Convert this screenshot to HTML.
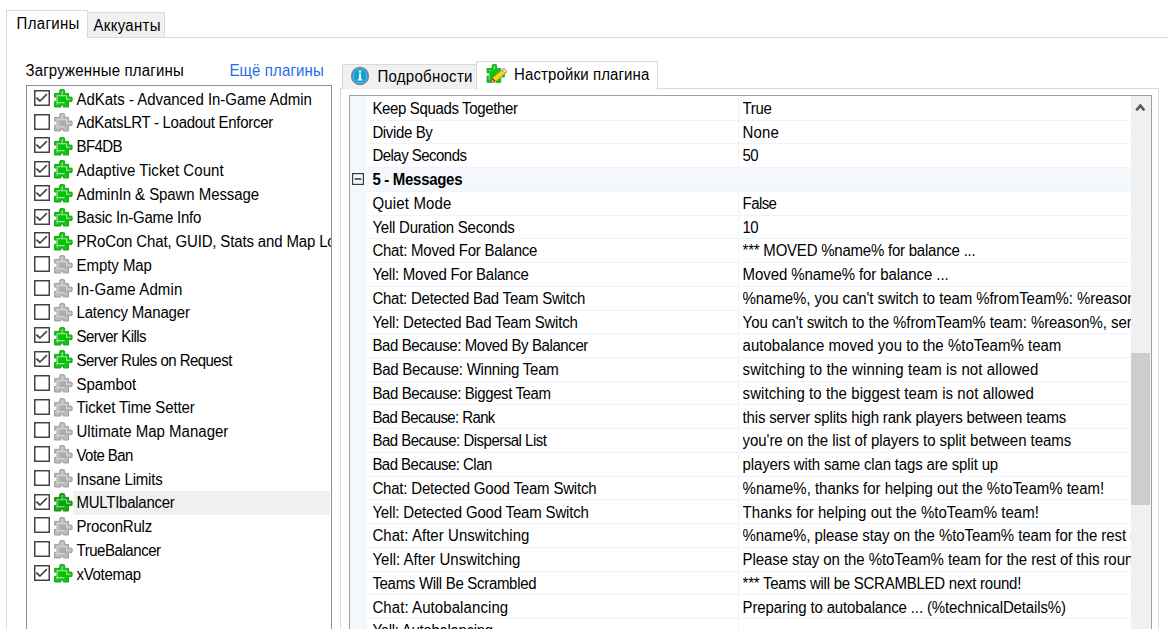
<!DOCTYPE html>
<html><head><meta charset="utf-8"><style>
*{box-sizing:border-box}
html,body{margin:0;padding:0;width:1168px;height:629px;overflow:hidden;background:#fff;
 font-family:"Liberation Sans",sans-serif;font-size:15px;color:#000}
.abs{position:absolute}
.t{position:absolute;white-space:nowrap;line-height:17px;transform:scaleY(1.04);transform-origin:0 13.7px}
.nm,.vl{overflow:hidden}
.tab{position:absolute;border:1px solid #dadada;background:#f0f0f0;border-bottom:none}
.tabsel{background:#fff}
#list{position:absolute;left:26px;top:85px;width:306px;height:560px;border:1px solid #8c929b;background:#fff;overflow:hidden}
.it{position:absolute;left:-27px;width:330px;height:23.75px}
.it.sel::before{content:"";position:absolute;left:73px;top:1px;width:257px;height:24px;background:#f0f0f0}
.ck{position:absolute;left:33.5px;top:3.8px}
.pz{position:absolute;left:50px;top:0px}
#grid{position:absolute;left:349px;top:95px;width:803px;height:600px;border:1px solid #a0a0a0;background:#fff;overflow:hidden}
.margin{position:absolute;left:0;top:0;width:17px;height:100%;background:#f4f7fc}
.row{position:absolute;left:-350px;width:1131px;height:23.75px}
.row::after{content:"";position:absolute;left:367px;right:0;bottom:0;height:1px;background:#f0f3f9}
.row::before{content:"";position:absolute;left:738px;top:0;width:1px;height:100%;background:#f0f3f9}
.row.cat{background:linear-gradient(to right, transparent 350px, #f4f7fc 350px)}
.row.cat::before{display:none}
.minus{position:absolute;left:352px;top:6px}
#sb{position:absolute;left:781px;top:0;width:20px;height:100%;background:#f0f0f0}
#thumb{position:absolute;left:0;top:257px;width:19px;height:152px;background:#cdcdcd}
</style></head><body>
<div class="abs" style="left:87px;top:37px;width:1081px;height:1px;background:#dadada"></div>
<div class="abs" style="left:6px;top:37px;width:1px;height:600px;background:#dadada"></div>
<div class="tab" style="left:87px;top:12px;width:78px;height:25px"></div>
<div class="tab tabsel" style="left:6px;top:10px;width:82px;height:28px"></div>
<div class="t" style="left:16.5px;top:15.30px;letter-spacing:0.35px">Плагины</div>
<div class="t" style="left:93.5px;top:17.30px;letter-spacing:0.3px">Аккуанты</div>
<div class="t" style="left:25.4px;top:62.30px;letter-spacing:0.18px">Загруженные плагины</div>
<div class="t" style="left:229.4px;top:62.30px;color:#1e6ee8;letter-spacing:0.14px">Ещё плагины</div>

<div id="list"><div class="it" style="top:0.00px"><svg class="ck" width="16" height="16" viewBox="0 0 16 16"><rect x="0.75" y="0.75" width="14.5" height="14.5" fill="#fff" stroke="#383838" stroke-width="1.4"/><path d="M2.3 7.6 L6 11 L12.9 4.2" fill="none" stroke="#454545" stroke-width="1.7" stroke-linejoin="round"/></svg><svg class="pz" width="24" height="24" viewBox="0 0 24 24"><path d="M4.6 7.4 H9.7 V4.8 Q9.7 3.6 10.9 3.6 H13.5 Q14.7 3.6 14.7 4.8 V7.4 H18.5 V11.1 H21.4 Q22.1 11.1 22.1 11.8 V14.9 Q22.1 15.6 21.4 15.6 H18.5 V21 H13.4 V19.1 H10.9 V21 H4.6 V15.3 H6.9 V11.1 H4.6 Z" fill="#19be19" stroke="#06b006" stroke-width="1"/><rect x="10" y="10.2" width="6.4" height="6" fill="#00c600"/><path d="M6.6 9.8 H16.6 V13.3 H20.5 M12.2 5 V9.8 M7.1 9.8 V18.4 M7.1 16.6 H14.5" stroke="#b0e0b0" stroke-width="1.1" fill="none"/></svg><div class="t" style="left:76.5px;top:4.60px;letter-spacing:-0.02px">AdKats - Advanced In-Game Admin</div></div><div class="it" style="top:23.75px"><svg class="ck" width="16" height="16" viewBox="0 0 16 16"><rect x="0.75" y="0.75" width="14.5" height="14.5" fill="#fff" stroke="#383838" stroke-width="1.4"/></svg><svg class="pz" width="24" height="24" viewBox="0 0 24 24"><path d="M4.6 7.4 H9.7 V4.8 Q9.7 3.6 10.9 3.6 H13.5 Q14.7 3.6 14.7 4.8 V7.4 H18.5 V11.1 H21.4 Q22.1 11.1 22.1 11.8 V14.9 Q22.1 15.6 21.4 15.6 H18.5 V21 H13.4 V19.1 H10.9 V21 H4.6 V15.3 H6.9 V11.1 H4.6 Z" fill="#bababa" stroke="#9e9e9e" stroke-width="1"/><rect x="10" y="10.2" width="6.4" height="6" fill="#acacac"/><path d="M6.6 9.8 H16.6 V13.3 H20.5 M12.2 5 V9.8 M7.1 9.8 V18.4 M7.1 16.6 H14.5" stroke="#d6d6d6" stroke-width="1.1" fill="none"/></svg><div class="t" style="left:76.5px;top:4.60px;letter-spacing:-0.289px">AdKatsLRT - Loadout Enforcer</div></div><div class="it" style="top:47.50px"><svg class="ck" width="16" height="16" viewBox="0 0 16 16"><rect x="0.75" y="0.75" width="14.5" height="14.5" fill="#fff" stroke="#383838" stroke-width="1.4"/><path d="M2.3 7.6 L6 11 L12.9 4.2" fill="none" stroke="#454545" stroke-width="1.7" stroke-linejoin="round"/></svg><svg class="pz" width="24" height="24" viewBox="0 0 24 24"><path d="M4.6 7.4 H9.7 V4.8 Q9.7 3.6 10.9 3.6 H13.5 Q14.7 3.6 14.7 4.8 V7.4 H18.5 V11.1 H21.4 Q22.1 11.1 22.1 11.8 V14.9 Q22.1 15.6 21.4 15.6 H18.5 V21 H13.4 V19.1 H10.9 V21 H4.6 V15.3 H6.9 V11.1 H4.6 Z" fill="#19be19" stroke="#06b006" stroke-width="1"/><rect x="10" y="10.2" width="6.4" height="6" fill="#00c600"/><path d="M6.6 9.8 H16.6 V13.3 H20.5 M12.2 5 V9.8 M7.1 9.8 V18.4 M7.1 16.6 H14.5" stroke="#b0e0b0" stroke-width="1.1" fill="none"/></svg><div class="t" style="left:76.5px;top:4.60px;letter-spacing:-0.6px">BF4DB</div></div><div class="it" style="top:71.25px"><svg class="ck" width="16" height="16" viewBox="0 0 16 16"><rect x="0.75" y="0.75" width="14.5" height="14.5" fill="#fff" stroke="#383838" stroke-width="1.4"/><path d="M2.3 7.6 L6 11 L12.9 4.2" fill="none" stroke="#454545" stroke-width="1.7" stroke-linejoin="round"/></svg><svg class="pz" width="24" height="24" viewBox="0 0 24 24"><path d="M4.6 7.4 H9.7 V4.8 Q9.7 3.6 10.9 3.6 H13.5 Q14.7 3.6 14.7 4.8 V7.4 H18.5 V11.1 H21.4 Q22.1 11.1 22.1 11.8 V14.9 Q22.1 15.6 21.4 15.6 H18.5 V21 H13.4 V19.1 H10.9 V21 H4.6 V15.3 H6.9 V11.1 H4.6 Z" fill="#19be19" stroke="#06b006" stroke-width="1"/><rect x="10" y="10.2" width="6.4" height="6" fill="#00c600"/><path d="M6.6 9.8 H16.6 V13.3 H20.5 M12.2 5 V9.8 M7.1 9.8 V18.4 M7.1 16.6 H14.5" stroke="#b0e0b0" stroke-width="1.1" fill="none"/></svg><div class="t" style="left:76.5px;top:4.60px;letter-spacing:0.06px">Adaptive Ticket Count</div></div><div class="it" style="top:95.00px"><svg class="ck" width="16" height="16" viewBox="0 0 16 16"><rect x="0.75" y="0.75" width="14.5" height="14.5" fill="#fff" stroke="#383838" stroke-width="1.4"/><path d="M2.3 7.6 L6 11 L12.9 4.2" fill="none" stroke="#454545" stroke-width="1.7" stroke-linejoin="round"/></svg><svg class="pz" width="24" height="24" viewBox="0 0 24 24"><path d="M4.6 7.4 H9.7 V4.8 Q9.7 3.6 10.9 3.6 H13.5 Q14.7 3.6 14.7 4.8 V7.4 H18.5 V11.1 H21.4 Q22.1 11.1 22.1 11.8 V14.9 Q22.1 15.6 21.4 15.6 H18.5 V21 H13.4 V19.1 H10.9 V21 H4.6 V15.3 H6.9 V11.1 H4.6 Z" fill="#19be19" stroke="#06b006" stroke-width="1"/><rect x="10" y="10.2" width="6.4" height="6" fill="#00c600"/><path d="M6.6 9.8 H16.6 V13.3 H20.5 M12.2 5 V9.8 M7.1 9.8 V18.4 M7.1 16.6 H14.5" stroke="#b0e0b0" stroke-width="1.1" fill="none"/></svg><div class="t" style="left:76.5px;top:4.60px;letter-spacing:-0.073px">AdminIn &amp; Spawn Message</div></div><div class="it" style="top:118.75px"><svg class="ck" width="16" height="16" viewBox="0 0 16 16"><rect x="0.75" y="0.75" width="14.5" height="14.5" fill="#fff" stroke="#383838" stroke-width="1.4"/><path d="M2.3 7.6 L6 11 L12.9 4.2" fill="none" stroke="#454545" stroke-width="1.7" stroke-linejoin="round"/></svg><svg class="pz" width="24" height="24" viewBox="0 0 24 24"><path d="M4.6 7.4 H9.7 V4.8 Q9.7 3.6 10.9 3.6 H13.5 Q14.7 3.6 14.7 4.8 V7.4 H18.5 V11.1 H21.4 Q22.1 11.1 22.1 11.8 V14.9 Q22.1 15.6 21.4 15.6 H18.5 V21 H13.4 V19.1 H10.9 V21 H4.6 V15.3 H6.9 V11.1 H4.6 Z" fill="#19be19" stroke="#06b006" stroke-width="1"/><rect x="10" y="10.2" width="6.4" height="6" fill="#00c600"/><path d="M6.6 9.8 H16.6 V13.3 H20.5 M12.2 5 V9.8 M7.1 9.8 V18.4 M7.1 16.6 H14.5" stroke="#b0e0b0" stroke-width="1.1" fill="none"/></svg><div class="t" style="left:76.5px;top:4.60px;letter-spacing:-0.206px">Basic In-Game Info</div></div><div class="it" style="top:142.50px"><svg class="ck" width="16" height="16" viewBox="0 0 16 16"><rect x="0.75" y="0.75" width="14.5" height="14.5" fill="#fff" stroke="#383838" stroke-width="1.4"/><path d="M2.3 7.6 L6 11 L12.9 4.2" fill="none" stroke="#454545" stroke-width="1.7" stroke-linejoin="round"/></svg><svg class="pz" width="24" height="24" viewBox="0 0 24 24"><path d="M4.6 7.4 H9.7 V4.8 Q9.7 3.6 10.9 3.6 H13.5 Q14.7 3.6 14.7 4.8 V7.4 H18.5 V11.1 H21.4 Q22.1 11.1 22.1 11.8 V14.9 Q22.1 15.6 21.4 15.6 H18.5 V21 H13.4 V19.1 H10.9 V21 H4.6 V15.3 H6.9 V11.1 H4.6 Z" fill="#19be19" stroke="#06b006" stroke-width="1"/><rect x="10" y="10.2" width="6.4" height="6" fill="#00c600"/><path d="M6.6 9.8 H16.6 V13.3 H20.5 M12.2 5 V9.8 M7.1 9.8 V18.4 M7.1 16.6 H14.5" stroke="#b0e0b0" stroke-width="1.1" fill="none"/></svg><div class="t" style="left:76.5px;top:4.60px;letter-spacing:-0.15px">PRoCon Chat, GUID, Stats and Map Logger</div></div><div class="it" style="top:166.25px"><svg class="ck" width="16" height="16" viewBox="0 0 16 16"><rect x="0.75" y="0.75" width="14.5" height="14.5" fill="#fff" stroke="#383838" stroke-width="1.4"/></svg><svg class="pz" width="24" height="24" viewBox="0 0 24 24"><path d="M4.6 7.4 H9.7 V4.8 Q9.7 3.6 10.9 3.6 H13.5 Q14.7 3.6 14.7 4.8 V7.4 H18.5 V11.1 H21.4 Q22.1 11.1 22.1 11.8 V14.9 Q22.1 15.6 21.4 15.6 H18.5 V21 H13.4 V19.1 H10.9 V21 H4.6 V15.3 H6.9 V11.1 H4.6 Z" fill="#bababa" stroke="#9e9e9e" stroke-width="1"/><rect x="10" y="10.2" width="6.4" height="6" fill="#acacac"/><path d="M6.6 9.8 H16.6 V13.3 H20.5 M12.2 5 V9.8 M7.1 9.8 V18.4 M7.1 16.6 H14.5" stroke="#d6d6d6" stroke-width="1.1" fill="none"/></svg><div class="t" style="left:76.5px;top:4.60px;letter-spacing:-0.05px">Empty Map</div></div><div class="it" style="top:190.00px"><svg class="ck" width="16" height="16" viewBox="0 0 16 16"><rect x="0.75" y="0.75" width="14.5" height="14.5" fill="#fff" stroke="#383838" stroke-width="1.4"/></svg><svg class="pz" width="24" height="24" viewBox="0 0 24 24"><path d="M4.6 7.4 H9.7 V4.8 Q9.7 3.6 10.9 3.6 H13.5 Q14.7 3.6 14.7 4.8 V7.4 H18.5 V11.1 H21.4 Q22.1 11.1 22.1 11.8 V14.9 Q22.1 15.6 21.4 15.6 H18.5 V21 H13.4 V19.1 H10.9 V21 H4.6 V15.3 H6.9 V11.1 H4.6 Z" fill="#bababa" stroke="#9e9e9e" stroke-width="1"/><rect x="10" y="10.2" width="6.4" height="6" fill="#acacac"/><path d="M6.6 9.8 H16.6 V13.3 H20.5 M12.2 5 V9.8 M7.1 9.8 V18.4 M7.1 16.6 H14.5" stroke="#d6d6d6" stroke-width="1.1" fill="none"/></svg><div class="t" style="left:76.5px;top:4.60px;letter-spacing:0.133px">In-Game Admin</div></div><div class="it" style="top:213.75px"><svg class="ck" width="16" height="16" viewBox="0 0 16 16"><rect x="0.75" y="0.75" width="14.5" height="14.5" fill="#fff" stroke="#383838" stroke-width="1.4"/></svg><svg class="pz" width="24" height="24" viewBox="0 0 24 24"><path d="M4.6 7.4 H9.7 V4.8 Q9.7 3.6 10.9 3.6 H13.5 Q14.7 3.6 14.7 4.8 V7.4 H18.5 V11.1 H21.4 Q22.1 11.1 22.1 11.8 V14.9 Q22.1 15.6 21.4 15.6 H18.5 V21 H13.4 V19.1 H10.9 V21 H4.6 V15.3 H6.9 V11.1 H4.6 Z" fill="#bababa" stroke="#9e9e9e" stroke-width="1"/><rect x="10" y="10.2" width="6.4" height="6" fill="#acacac"/><path d="M6.6 9.8 H16.6 V13.3 H20.5 M12.2 5 V9.8 M7.1 9.8 V18.4 M7.1 16.6 H14.5" stroke="#d6d6d6" stroke-width="1.1" fill="none"/></svg><div class="t" style="left:76.5px;top:4.60px;letter-spacing:-0.179px">Latency Manager</div></div><div class="it" style="top:237.50px"><svg class="ck" width="16" height="16" viewBox="0 0 16 16"><rect x="0.75" y="0.75" width="14.5" height="14.5" fill="#fff" stroke="#383838" stroke-width="1.4"/><path d="M2.3 7.6 L6 11 L12.9 4.2" fill="none" stroke="#454545" stroke-width="1.7" stroke-linejoin="round"/></svg><svg class="pz" width="24" height="24" viewBox="0 0 24 24"><path d="M4.6 7.4 H9.7 V4.8 Q9.7 3.6 10.9 3.6 H13.5 Q14.7 3.6 14.7 4.8 V7.4 H18.5 V11.1 H21.4 Q22.1 11.1 22.1 11.8 V14.9 Q22.1 15.6 21.4 15.6 H18.5 V21 H13.4 V19.1 H10.9 V21 H4.6 V15.3 H6.9 V11.1 H4.6 Z" fill="#19be19" stroke="#06b006" stroke-width="1"/><rect x="10" y="10.2" width="6.4" height="6" fill="#00c600"/><path d="M6.6 9.8 H16.6 V13.3 H20.5 M12.2 5 V9.8 M7.1 9.8 V18.4 M7.1 16.6 H14.5" stroke="#b0e0b0" stroke-width="1.1" fill="none"/></svg><div class="t" style="left:76.5px;top:4.60px;letter-spacing:-0.527px">Server Kills</div></div><div class="it" style="top:261.25px"><svg class="ck" width="16" height="16" viewBox="0 0 16 16"><rect x="0.75" y="0.75" width="14.5" height="14.5" fill="#fff" stroke="#383838" stroke-width="1.4"/><path d="M2.3 7.6 L6 11 L12.9 4.2" fill="none" stroke="#454545" stroke-width="1.7" stroke-linejoin="round"/></svg><svg class="pz" width="24" height="24" viewBox="0 0 24 24"><path d="M4.6 7.4 H9.7 V4.8 Q9.7 3.6 10.9 3.6 H13.5 Q14.7 3.6 14.7 4.8 V7.4 H18.5 V11.1 H21.4 Q22.1 11.1 22.1 11.8 V14.9 Q22.1 15.6 21.4 15.6 H18.5 V21 H13.4 V19.1 H10.9 V21 H4.6 V15.3 H6.9 V11.1 H4.6 Z" fill="#19be19" stroke="#06b006" stroke-width="1"/><rect x="10" y="10.2" width="6.4" height="6" fill="#00c600"/><path d="M6.6 9.8 H16.6 V13.3 H20.5 M12.2 5 V9.8 M7.1 9.8 V18.4 M7.1 16.6 H14.5" stroke="#b0e0b0" stroke-width="1.1" fill="none"/></svg><div class="t" style="left:76.5px;top:4.60px;letter-spacing:-0.536px">Server Rules on Request</div></div><div class="it" style="top:285.00px"><svg class="ck" width="16" height="16" viewBox="0 0 16 16"><rect x="0.75" y="0.75" width="14.5" height="14.5" fill="#fff" stroke="#383838" stroke-width="1.4"/></svg><svg class="pz" width="24" height="24" viewBox="0 0 24 24"><path d="M4.6 7.4 H9.7 V4.8 Q9.7 3.6 10.9 3.6 H13.5 Q14.7 3.6 14.7 4.8 V7.4 H18.5 V11.1 H21.4 Q22.1 11.1 22.1 11.8 V14.9 Q22.1 15.6 21.4 15.6 H18.5 V21 H13.4 V19.1 H10.9 V21 H4.6 V15.3 H6.9 V11.1 H4.6 Z" fill="#bababa" stroke="#9e9e9e" stroke-width="1"/><rect x="10" y="10.2" width="6.4" height="6" fill="#acacac"/><path d="M6.6 9.8 H16.6 V13.3 H20.5 M12.2 5 V9.8 M7.1 9.8 V18.4 M7.1 16.6 H14.5" stroke="#d6d6d6" stroke-width="1.1" fill="none"/></svg><div class="t" style="left:76.5px;top:4.60px;letter-spacing:-0.05px">Spambot</div></div><div class="it" style="top:308.75px"><svg class="ck" width="16" height="16" viewBox="0 0 16 16"><rect x="0.75" y="0.75" width="14.5" height="14.5" fill="#fff" stroke="#383838" stroke-width="1.4"/></svg><svg class="pz" width="24" height="24" viewBox="0 0 24 24"><path d="M4.6 7.4 H9.7 V4.8 Q9.7 3.6 10.9 3.6 H13.5 Q14.7 3.6 14.7 4.8 V7.4 H18.5 V11.1 H21.4 Q22.1 11.1 22.1 11.8 V14.9 Q22.1 15.6 21.4 15.6 H18.5 V21 H13.4 V19.1 H10.9 V21 H4.6 V15.3 H6.9 V11.1 H4.6 Z" fill="#bababa" stroke="#9e9e9e" stroke-width="1"/><rect x="10" y="10.2" width="6.4" height="6" fill="#acacac"/><path d="M6.6 9.8 H16.6 V13.3 H20.5 M12.2 5 V9.8 M7.1 9.8 V18.4 M7.1 16.6 H14.5" stroke="#d6d6d6" stroke-width="1.1" fill="none"/></svg><div class="t" style="left:76.5px;top:4.60px;letter-spacing:-0.124px">Ticket Time Setter</div></div><div class="it" style="top:332.50px"><svg class="ck" width="16" height="16" viewBox="0 0 16 16"><rect x="0.75" y="0.75" width="14.5" height="14.5" fill="#fff" stroke="#383838" stroke-width="1.4"/></svg><svg class="pz" width="24" height="24" viewBox="0 0 24 24"><path d="M4.6 7.4 H9.7 V4.8 Q9.7 3.6 10.9 3.6 H13.5 Q14.7 3.6 14.7 4.8 V7.4 H18.5 V11.1 H21.4 Q22.1 11.1 22.1 11.8 V14.9 Q22.1 15.6 21.4 15.6 H18.5 V21 H13.4 V19.1 H10.9 V21 H4.6 V15.3 H6.9 V11.1 H4.6 Z" fill="#bababa" stroke="#9e9e9e" stroke-width="1"/><rect x="10" y="10.2" width="6.4" height="6" fill="#acacac"/><path d="M6.6 9.8 H16.6 V13.3 H20.5 M12.2 5 V9.8 M7.1 9.8 V18.4 M7.1 16.6 H14.5" stroke="#d6d6d6" stroke-width="1.1" fill="none"/></svg><div class="t" style="left:76.5px;top:4.60px;letter-spacing:0.005px">Ultimate Map Manager</div></div><div class="it" style="top:356.25px"><svg class="ck" width="16" height="16" viewBox="0 0 16 16"><rect x="0.75" y="0.75" width="14.5" height="14.5" fill="#fff" stroke="#383838" stroke-width="1.4"/></svg><svg class="pz" width="24" height="24" viewBox="0 0 24 24"><path d="M4.6 7.4 H9.7 V4.8 Q9.7 3.6 10.9 3.6 H13.5 Q14.7 3.6 14.7 4.8 V7.4 H18.5 V11.1 H21.4 Q22.1 11.1 22.1 11.8 V14.9 Q22.1 15.6 21.4 15.6 H18.5 V21 H13.4 V19.1 H10.9 V21 H4.6 V15.3 H6.9 V11.1 H4.6 Z" fill="#bababa" stroke="#9e9e9e" stroke-width="1"/><rect x="10" y="10.2" width="6.4" height="6" fill="#acacac"/><path d="M6.6 9.8 H16.6 V13.3 H20.5 M12.2 5 V9.8 M7.1 9.8 V18.4 M7.1 16.6 H14.5" stroke="#d6d6d6" stroke-width="1.1" fill="none"/></svg><div class="t" style="left:76.5px;top:4.60px;letter-spacing:-0.571px">Vote Ban</div></div><div class="it" style="top:380.00px"><svg class="ck" width="16" height="16" viewBox="0 0 16 16"><rect x="0.75" y="0.75" width="14.5" height="14.5" fill="#fff" stroke="#383838" stroke-width="1.4"/></svg><svg class="pz" width="24" height="24" viewBox="0 0 24 24"><path d="M4.6 7.4 H9.7 V4.8 Q9.7 3.6 10.9 3.6 H13.5 Q14.7 3.6 14.7 4.8 V7.4 H18.5 V11.1 H21.4 Q22.1 11.1 22.1 11.8 V14.9 Q22.1 15.6 21.4 15.6 H18.5 V21 H13.4 V19.1 H10.9 V21 H4.6 V15.3 H6.9 V11.1 H4.6 Z" fill="#bababa" stroke="#9e9e9e" stroke-width="1"/><rect x="10" y="10.2" width="6.4" height="6" fill="#acacac"/><path d="M6.6 9.8 H16.6 V13.3 H20.5 M12.2 5 V9.8 M7.1 9.8 V18.4 M7.1 16.6 H14.5" stroke="#d6d6d6" stroke-width="1.1" fill="none"/></svg><div class="t" style="left:76.5px;top:4.60px;letter-spacing:-0.175px">Insane Limits</div></div><div class="it sel" style="top:403.75px"><svg class="ck" width="16" height="16" viewBox="0 0 16 16"><rect x="0.75" y="0.75" width="14.5" height="14.5" fill="#fff" stroke="#383838" stroke-width="1.4"/><path d="M2.3 7.6 L6 11 L12.9 4.2" fill="none" stroke="#454545" stroke-width="1.7" stroke-linejoin="round"/></svg><svg class="pz" width="24" height="24" viewBox="0 0 24 24"><path d="M4.6 7.4 H9.7 V4.8 Q9.7 3.6 10.9 3.6 H13.5 Q14.7 3.6 14.7 4.8 V7.4 H18.5 V11.1 H21.4 Q22.1 11.1 22.1 11.8 V14.9 Q22.1 15.6 21.4 15.6 H18.5 V21 H13.4 V19.1 H10.9 V21 H4.6 V15.3 H6.9 V11.1 H4.6 Z" fill="#16a816" stroke="#089408" stroke-width="1"/><rect x="10" y="10.2" width="6.4" height="6" fill="#04a804"/><path d="M6.6 9.8 H16.6 V13.3 H20.5 M12.2 5 V9.8 M7.1 9.8 V18.4 M7.1 16.6 H14.5" stroke="#8fcf8f" stroke-width="1.1" fill="none"/></svg><div class="t" style="left:76.5px;top:4.60px;letter-spacing:-0.258px">MULTIbalancer</div></div><div class="it" style="top:427.50px"><svg class="ck" width="16" height="16" viewBox="0 0 16 16"><rect x="0.75" y="0.75" width="14.5" height="14.5" fill="#fff" stroke="#383838" stroke-width="1.4"/></svg><svg class="pz" width="24" height="24" viewBox="0 0 24 24"><path d="M4.6 7.4 H9.7 V4.8 Q9.7 3.6 10.9 3.6 H13.5 Q14.7 3.6 14.7 4.8 V7.4 H18.5 V11.1 H21.4 Q22.1 11.1 22.1 11.8 V14.9 Q22.1 15.6 21.4 15.6 H18.5 V21 H13.4 V19.1 H10.9 V21 H4.6 V15.3 H6.9 V11.1 H4.6 Z" fill="#bababa" stroke="#9e9e9e" stroke-width="1"/><rect x="10" y="10.2" width="6.4" height="6" fill="#acacac"/><path d="M6.6 9.8 H16.6 V13.3 H20.5 M12.2 5 V9.8 M7.1 9.8 V18.4 M7.1 16.6 H14.5" stroke="#d6d6d6" stroke-width="1.1" fill="none"/></svg><div class="t" style="left:76.5px;top:4.60px;letter-spacing:-0.211px">ProconRulz</div></div><div class="it" style="top:451.25px"><svg class="ck" width="16" height="16" viewBox="0 0 16 16"><rect x="0.75" y="0.75" width="14.5" height="14.5" fill="#fff" stroke="#383838" stroke-width="1.4"/></svg><svg class="pz" width="24" height="24" viewBox="0 0 24 24"><path d="M4.6 7.4 H9.7 V4.8 Q9.7 3.6 10.9 3.6 H13.5 Q14.7 3.6 14.7 4.8 V7.4 H18.5 V11.1 H21.4 Q22.1 11.1 22.1 11.8 V14.9 Q22.1 15.6 21.4 15.6 H18.5 V21 H13.4 V19.1 H10.9 V21 H4.6 V15.3 H6.9 V11.1 H4.6 Z" fill="#bababa" stroke="#9e9e9e" stroke-width="1"/><rect x="10" y="10.2" width="6.4" height="6" fill="#acacac"/><path d="M6.6 9.8 H16.6 V13.3 H20.5 M12.2 5 V9.8 M7.1 9.8 V18.4 M7.1 16.6 H14.5" stroke="#d6d6d6" stroke-width="1.1" fill="none"/></svg><div class="t" style="left:76.5px;top:4.60px;letter-spacing:-0.445px">TrueBalancer</div></div><div class="it" style="top:475.00px"><svg class="ck" width="16" height="16" viewBox="0 0 16 16"><rect x="0.75" y="0.75" width="14.5" height="14.5" fill="#fff" stroke="#383838" stroke-width="1.4"/><path d="M2.3 7.6 L6 11 L12.9 4.2" fill="none" stroke="#454545" stroke-width="1.7" stroke-linejoin="round"/></svg><svg class="pz" width="24" height="24" viewBox="0 0 24 24"><path d="M4.6 7.4 H9.7 V4.8 Q9.7 3.6 10.9 3.6 H13.5 Q14.7 3.6 14.7 4.8 V7.4 H18.5 V11.1 H21.4 Q22.1 11.1 22.1 11.8 V14.9 Q22.1 15.6 21.4 15.6 H18.5 V21 H13.4 V19.1 H10.9 V21 H4.6 V15.3 H6.9 V11.1 H4.6 Z" fill="#19be19" stroke="#06b006" stroke-width="1"/><rect x="10" y="10.2" width="6.4" height="6" fill="#00c600"/><path d="M6.6 9.8 H16.6 V13.3 H20.5 M12.2 5 V9.8 M7.1 9.8 V18.4 M7.1 16.6 H14.5" stroke="#b0e0b0" stroke-width="1.1" fill="none"/></svg><div class="t" style="left:76.5px;top:4.60px;letter-spacing:-0.314px">xVotemap</div></div></div>

<div class="abs" style="left:340px;top:88px;width:819px;height:600px;border:1px solid #dadada;background:#fff"></div>
<div class="tab" style="left:342px;top:64px;width:135px;height:25px"></div>
<div class="tab tabsel" style="left:476px;top:61px;width:182px;height:29px"></div>
<svg class="abs" style="left:350px;top:66px" width="20" height="20" viewBox="0 0 20 20">
 <circle cx="10" cy="10" r="8.5" fill="#10a0d6" stroke="#7d8b96" stroke-width="1.4"/>
 <circle cx="10" cy="10" r="6.8" fill="none" stroke="#5cc0e8" stroke-width="0.8"/>
 <rect x="8.9" y="4.6" width="2.2" height="2" fill="#fff"/>
 <path d="M8.9 7.6 H11.1 V13.2 H12.3 V14.6 H7.7 V13.2 H8.9 Z" fill="#fff"/>
</svg>
<div class="t" style="left:377.5px;top:68.30px;letter-spacing:0.27px">Подробности</div>
<svg class="abs" style="left:484px;top:62px" width="24" height="24" viewBox="0 0 24 24">
 <path d="M3.1 6.5 H8.2 V3.6 Q8.2 2.5 9.3 2.5 H11.6 Q12.7 2.5 12.7 3.6 V6.5 H16.7 V10.9 H20.3 V14.9 H16.7 V20.3 H12 V18.6 H9.6 V20.3 H3.1 V14 H5.5 V10.9 H3.1 Z" fill="#14c014" stroke="#08ac08" stroke-width="0.9"/>
 <path d="M12.7 6.5 H16.7 V8" stroke="#7a8a7a" stroke-width="0.9" fill="none"/>
 <path d="M5.2 8.6 H7.2 M10.4 3.6 V7.6 M5.2 10.6 V18" stroke="#a8dca8" stroke-width="0.9" fill="none"/>
 <path d="M8.15 16.57 L20.07 6.33 L22.93 9.67 L11.0 19.9 Z" fill="#f8d41c" stroke="#e2a400" stroke-width="0.7"/>
 <path d="M19.6 9.63 L18.17 7.96 L20.07 6.33 L22.93 9.67 L21.03 11.3 Z" fill="#f2e2c8" stroke="#8c8c8c" stroke-width="0.8"/>
 <path d="M7.3 20.2 L8.15 16.57 L11.0 19.9 Z" fill="#f0d8b0" stroke="#b04010" stroke-width="0.5"/>
 <path d="M8.3 16.5 L11 19.6" stroke="#d02a10" stroke-width="1.6"/>
</svg>
<div class="t" style="left:514px;top:66.30px;letter-spacing:0.12px">Настройки плагина</div>

<div id="grid">
 <div class="margin"></div>
 <div class="row" style="top:0px;height:25px"><div class="t nm" style="left:372.4px;top:4.30px;width:365px;letter-spacing:-0.353px">Keep Squads Together</div><div class="t vl" style="left:742.6px;top:4.30px;width:388px;letter-spacing:-0.333px">True</div></div><div class="row" style="top:25px;height:23px"><div class="t nm" style="left:372.4px;top:3.30px;width:365px;letter-spacing:-0.362px">Divide By</div><div class="t vl" style="left:742.6px;top:3.30px;width:388px;letter-spacing:0.167px">None</div></div><div class="row" style="top:48px;height:24px"><div class="t nm" style="left:372.4px;top:3.30px;width:365px;letter-spacing:-0.525px">Delay Seconds</div><div class="t vl" style="left:742.6px;top:3.30px;width:388px;letter-spacing:-0.6px">50</div></div><div class="row cat" style="top:72px;height:24px"><svg class="minus" style="top:5px" width="12" height="12" viewBox="0 0 12 12"><rect x="0.6" y="0.6" width="10.8" height="10.8" fill="none" stroke="#3c3c3c" stroke-width="1.2"/><path d="M2.6 6 H9.4" stroke="#222" stroke-width="1.4"/></svg><div class="t" style="left:372.4px;top:3.30px;font-weight:bold;letter-spacing:-0.3px">5 - Messages</div></div><div class="row" style="top:96px;height:24px"><div class="t nm" style="left:372.4px;top:3.30px;width:365px;letter-spacing:0.167px">Quiet Mode</div><div class="t vl" style="left:742.6px;top:3.30px;width:388px;letter-spacing:-0.6px">False</div></div><div class="row" style="top:120px;height:23px"><div class="t nm" style="left:372.4px;top:3.30px;width:365px;letter-spacing:-0.23px">Yell Duration Seconds</div><div class="t vl" style="left:742.6px;top:3.30px;width:388px;letter-spacing:-0.6px">10</div></div><div class="row" style="top:143px;height:24px"><div class="t nm" style="left:372.4px;top:3.30px;width:365px;letter-spacing:-0.232px">Chat: Moved For Balance</div><div class="t vl" style="left:742.6px;top:3.30px;width:388px;letter-spacing:-0.226px">*** MOVED %name% for balance ...</div></div><div class="row" style="top:167px;height:24px"><div class="t nm" style="left:372.4px;top:3.30px;width:365px;letter-spacing:-0.259px">Yell: Moved For Balance</div><div class="t vl" style="left:742.6px;top:3.30px;width:388px;letter-spacing:-0.089px">Moved %name% for balance ...</div></div><div class="row" style="top:191px;height:24px"><div class="t nm" style="left:372.4px;top:3.30px;width:365px;letter-spacing:-0.241px">Chat: Detected Bad Team Switch</div><div class="t vl" style="left:742.6px;top:3.30px;width:388px;letter-spacing:-0.08px">%name%, you can't switch to team %fromTeam%: %reason%</div></div><div class="row" style="top:215px;height:23px"><div class="t nm" style="left:372.4px;top:3.30px;width:365px;letter-spacing:-0.221px">Yell: Detected Bad Team Switch</div><div class="t vl" style="left:742.6px;top:3.30px;width:388px;letter-spacing:-0.08px">You can't switch to the %fromTeam% team: %reason%, sending you back</div></div><div class="row" style="top:238px;height:24px"><div class="t nm" style="left:372.4px;top:3.30px;width:365px;letter-spacing:-0.403px">Bad Because: Moved By Balancer</div><div class="t vl" style="left:742.6px;top:3.30px;width:388px;letter-spacing:0.005px">autobalance moved you to the %toTeam% team</div></div><div class="row" style="top:262px;height:24px"><div class="t nm" style="left:372.4px;top:3.30px;width:365px;letter-spacing:-0.25px">Bad Because: Winning Team</div><div class="t vl" style="left:742.6px;top:3.30px;width:388px;letter-spacing:0.112px">switching to the winning team is not allowed</div></div><div class="row" style="top:286px;height:23px"><div class="t nm" style="left:372.4px;top:3.30px;width:365px;letter-spacing:-0.4px">Bad Because: Biggest Team</div><div class="t vl" style="left:742.6px;top:3.30px;width:388px;letter-spacing:0.065px">switching to the biggest team is not allowed</div></div><div class="row" style="top:309px;height:24px"><div class="t nm" style="left:372.4px;top:4.30px;width:365px;letter-spacing:-0.6px">Bad Because: Rank</div><div class="t vl" style="left:742.6px;top:4.30px;width:388px;letter-spacing:-0.165px">this server splits high rank players between teams</div></div><div class="row" style="top:333px;height:24px"><div class="t nm" style="left:372.4px;top:3.30px;width:365px;letter-spacing:-0.504px">Bad Because: Dispersal List</div><div class="t vl" style="left:742.6px;top:3.30px;width:388px;letter-spacing:-0.055px">you're on the list of players to split between teams</div></div><div class="row" style="top:357px;height:24px"><div class="t nm" style="left:372.4px;top:3.30px;width:365px;letter-spacing:-0.531px">Bad Because: Clan</div><div class="t vl" style="left:742.6px;top:3.30px;width:388px;letter-spacing:-0.159px">players with same clan tags are split up</div></div><div class="row" style="top:381px;height:23px"><div class="t nm" style="left:372.4px;top:3.30px;width:365px;letter-spacing:-0.187px">Chat: Detected Good Team Switch</div><div class="t vl" style="left:742.6px;top:3.30px;width:388px;letter-spacing:-0.025px">%name%, thanks for helping out the %toTeam% team!</div></div><div class="row" style="top:404px;height:24px"><div class="t nm" style="left:372.4px;top:4.30px;width:365px;letter-spacing:-0.177px">Yell: Detected Good Team Switch</div><div class="t vl" style="left:742.6px;top:4.30px;width:388px;letter-spacing:0.027px">Thanks for helping out the %toTeam% team!</div></div><div class="row" style="top:428px;height:24px"><div class="t nm" style="left:372.4px;top:3.30px;width:365px;letter-spacing:0.05px">Chat: After Unswitching</div><div class="t vl" style="left:742.6px;top:3.30px;width:388px;letter-spacing:-0.08px">%name%, please stay on the %toTeam% team for the rest of this round</div></div><div class="row" style="top:452px;height:24px"><div class="t nm" style="left:372.4px;top:3.30px;width:365px;letter-spacing:0.009px">Yell: After Unswitching</div><div class="t vl" style="left:742.6px;top:3.30px;width:388px;letter-spacing:-0.08px">Please stay on the %toTeam% team for the rest of this round</div></div><div class="row" style="top:476px;height:23px"><div class="t nm" style="left:372.4px;top:3.30px;width:365px;letter-spacing:-0.305px">Teams Will Be Scrambled</div><div class="t vl" style="left:742.6px;top:3.30px;width:388px;letter-spacing:-0.247px">*** Teams will be SCRAMBLED next round!</div></div><div class="row" style="top:499px;height:24px"><div class="t nm" style="left:372.4px;top:4.30px;width:365px;letter-spacing:0.083px">Chat: Autobalancing</div><div class="t vl" style="left:742.6px;top:4.30px;width:388px;letter-spacing:-0.142px">Preparing to autobalance ... (%technicalDetails%)</div></div><div class="row" style="top:523px;height:24px"><div class="t nm" style="left:372.4px;top:3.30px;width:365px;letter-spacing:-0.3px">Yell: Autobalancing</div><div class="t vl" style="left:742.6px;top:3.30px;width:388px;letter-spacing:-0.08px"></div></div>
 <div id="sb">
  <svg class="abs" style="left:4px;top:7px" width="11" height="9" viewBox="0 0 11 9"><path d="M1.3 7.4 L5.3 2.6 L9.3 7.4" fill="none" stroke="#5a5a5a" stroke-width="2.6"/></svg>
  <div id="thumb"></div>
 </div>
</div>
</body></html>
